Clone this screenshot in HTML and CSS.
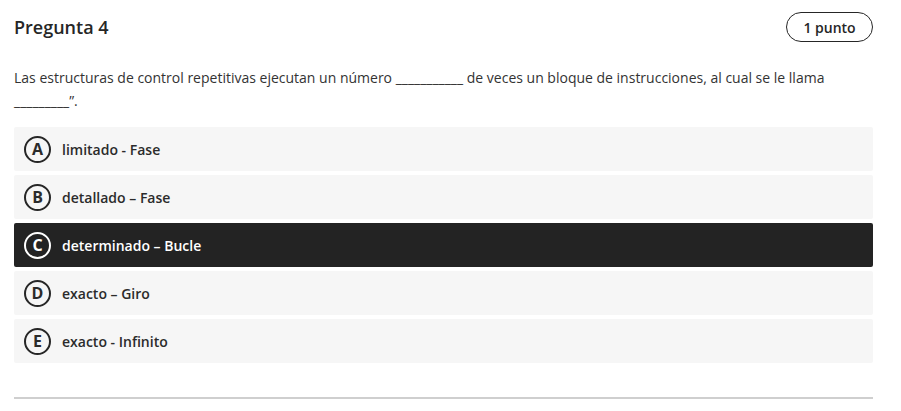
FILE: index.html
```html
<!DOCTYPE html>
<html lang="es">
<head>
<meta charset="utf-8">
<title>Pregunta 4</title>
<link rel="stylesheet" href="styles.css">
</head>
<body>
<div class="question">
  <div class="q-header">
    <h2 class="q-title">Pregunta 4</h2>
    <span class="q-points">1 punto</span>
  </div>
  <p class="q-text">Las estructuras de control repetitivas ejecutan un número ___________ de veces un bloque de instrucciones, al cual se le llama _________”.</p>
  <ul class="options">
    <li class="option"><span class="letter">A</span><span class="opt-text">limitado - Fase</span></li>
    <li class="option"><span class="letter">B</span><span class="opt-text">detallado – Fase</span></li>
    <li class="option selected"><span class="letter">C</span><span class="opt-text">determinado – Bucle</span></li>
    <li class="option"><span class="letter">D</span><span class="opt-text">exacto – Giro</span></li>
    <li class="option"><span class="letter">E</span><span class="opt-text">exacto - Infinito</span></li>
  </ul>
  <hr class="divider">
</div>
</body>
</html>
```
FILE: styles.css
```css
* { box-sizing: border-box; }
body {
  margin: 0;
  background: #fff;
  font-family: "Open Sans", "Noto Sans", sans-serif;
  color: #262626;
}
.question {
  padding: 12px 28px 0 14px;
}
.q-header {
  display: flex;
  justify-content: space-between;
  align-items: center;
  height: 30px;
}
.q-title {
  margin: 0;
  font-size: 18px;
  font-weight: 600;
  color: #262626;
}
.q-points {
  display: flex;
  align-items: center;
  justify-content: center;
  width: 87px;
  height: 30px;
  border: 1px solid #262626;
  border-radius: 15px;
  font-size: 14px;
  font-weight: 600;
}
.q-text {
  margin: 24px 0 0;
  font-size: 14px;
  line-height: 23px;
  color: #333;
}
.options {
  list-style: none;
  margin: 15px 0 0;
  padding: 0;
  display: flex;
  flex-direction: column;
  gap: 4px;
}
.option {
  display: flex;
  align-items: center;
  height: 44px;
  padding-left: 10px;
  background: #f6f6f6;
  border-radius: 2px;
  font-size: 14px;
  font-weight: 600;
  color: #2b2b2b;
}
.letter {
  display: flex;
  align-items: center;
  justify-content: center;
  width: 27px;
  height: 27px;
  border: 2px solid #262626;
  border-radius: 50%;
  font-size: 16px;
  font-weight: 700;
  margin-right: 11px;
}
.option.selected {
  background: #232323;
  color: #fff;
}
.option.selected .letter {
  border-color: #fff;
}
.divider {
  margin: 34px 0 0;
  border: 0;
  border-top: 2px solid #cfcfcf;
}
```
